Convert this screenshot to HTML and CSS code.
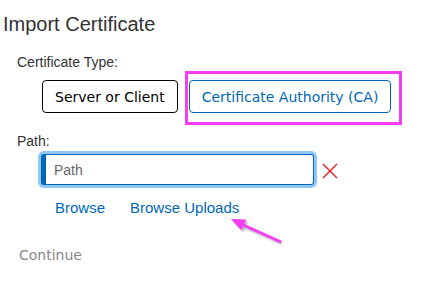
FILE: index.html
```html
<!DOCTYPE html>
<html lang="en">
<head>
  <meta charset="UTF-8" />
  <meta name="viewport" content="width=device-width, initial-scale=1.0" />
  <title>Import Certificate</title>
  <link rel="stylesheet" href="styles.css">
</head>
<body>
  <div class="pagina">
    <h1>Import Certificate</h1>
    <div class="formulario">
      <div class="rotulo">Certificate Type:</div>
      <div class="tipos">
        <button class="tipo">Server or Client</button>
        <div class="destaque-wrap">
          <button class="tipo ativo">Certificate Authority (CA)</button>
          <div class="destaque"></div>
        </div>
      </div>

      <label class="rotulo rotulo-path" for="path">Path:</label>
      <div class="linha-input">
        <input type="text" id="path" placeholder="Path" autofocus />
        <svg class="limpar" width="16" height="16" viewBox="0 0 16 16">
          <path d="M1 1 L15 15 M15 1 L1 15" stroke="#f01818" stroke-width="1.4" fill="none" />
        </svg>
      </div>

      <div class="links">
        <a href="#">Browse</a>
        <a href="#">Browse Uploads</a>
        <svg class="seta" width="65" height="38" viewBox="0 0 65 38">
          <defs>
            <filter id="sombra" x="-20%" y="-20%" width="140%" height="140%">
              <feGaussianBlur stdDeviation="1" />
            </filter>
          </defs>
          <g transform="translate(2,2)" filter="url(#sombra)" opacity="0.45">
            <line x1="17" y1="12.5" x2="55" y2="29.5" stroke="#555" stroke-width="3" />
            <polygon points="6,7 21.2,7.4 16.2,18.3" fill="#555" />
          </g>
          <line x1="17" y1="12.5" x2="55" y2="29.5" stroke="#f53df5" stroke-width="3" stroke-linecap="round" />
          <polygon points="6,7 21.2,7.4 16.2,18.3" fill="#f53df5" />
        </svg>
      </div>

      <button class="continuar" disabled>Continue</button>
    </div>
  </div>
</body>
</html>
```

FILE: styles.css
```css
body {
  margin: 0;
  font-family: "Liberation Sans", Arial, sans-serif;
  color: #333;
  background: #fff;
}
.pagina {
  position: relative;
  padding-left: 3px;
}
h1 {
  margin: 13px 0 0 0;
  font-size: 20px;
  line-height: 23px;
  font-weight: normal;
  color: #333;
}
.formulario {
  display: flex;
  flex-direction: column;
  align-items: flex-start;
  padding-left: 14px;
}
.rotulo {
  margin-top: 18px;
  font-size: 14px;
  line-height: 16px;
  color: #333;
}
.rotulo-path {
  margin-top: 20px;
}
.tipos {
  display: flex;
  gap: 11px;
  margin-top: 10px;
  margin-left: 25px;
}
.tipo {
  height: 33px;
  padding: 0 12px;
  display: inline-flex;
  align-items: center;
  font-family: "DejaVu Sans", Verdana, sans-serif;
  font-size: 14px;
  color: #000;
  background: #fff;
  border: 1px solid #000;
  border-radius: 4px;
  cursor: pointer;
}
.tipo.ativo {
  color: #0067b8;
  border-color: #0067b8;
}
.destaque-wrap {
  position: relative;
}
.destaque {
  position: absolute;
  left: -4px;
  top: -9px;
  width: 217px;
  height: 54px;
  box-sizing: border-box;
  border: 3px solid #f53df5;
  pointer-events: none;
}
.linha-input {
  display: flex;
  align-items: center;
  gap: 8px;
  margin-top: 5px;
  margin-left: 24px;
}
input {
  width: 273px;
  height: 31px;
  box-sizing: border-box;
  padding: 0 8px;
  font-family: "Liberation Sans", Arial, sans-serif;
  font-size: 14px;
  color: #333;
  border: 1.5px solid #0067b8;
  border-left-width: 5px;
  border-radius: 3px;
  box-shadow: 0 0 0 3px #8fc8f8;
  outline: none;
}
input::placeholder {
  color: #666;
}
.limpar {
  display: block;
  margin-top: 3px;
}
.links {
  position: relative;
  display: flex;
  gap: 25px;
  margin-top: 14px;
  margin-left: 38px;
}
.links a {
  font-size: 15px;
  line-height: 17px;
  color: #0067b8;
  text-decoration: none;
}
.seta {
  position: absolute;
  left: 170px;
  top: 13px;
}
.continuar {
  margin-top: 31px;
  margin-left: 2px;
  padding: 0;
  font-family: "DejaVu Sans", Verdana, sans-serif;
  font-size: 14px;
  line-height: 17px;
  color: #888;
  background: none;
  border: none;
}
```
